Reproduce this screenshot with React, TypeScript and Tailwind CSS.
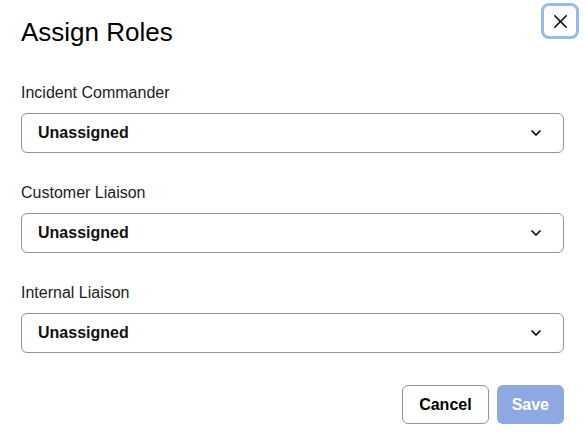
import { ChevronDown, X } from 'lucide-react';

const roles = ['Incident Commander', 'Customer Liaison', 'Internal Liaison'];

function RoleSelect({ label }: { label: string }) {
  return (
    <div className="flex flex-col">
      <label className="mb-2 text-base leading-6 text-[#1c1c1e]">{label}</label>
      <button
        type="button"
        className="flex h-10 w-full items-center justify-between rounded-md border border-[#8e96a4] bg-white pl-4 pr-[19px] text-left"
      >
        <span className="text-base font-bold text-[#111]">Unassigned</span>
        <ChevronDown className="h-4 w-4 text-black" strokeWidth={2.5} />
      </button>
    </div>
  );
}

export default function App() {
  return (
    <div
      className="relative h-[437px] w-[585px] bg-white"
      style={{ fontFamily: '"Liberation Sans", Arial, sans-serif' }}
    >
      <button
        type="button"
        className="absolute right-[6px] top-[3px] flex h-9 w-[38px] items-center justify-center rounded-lg border-[3px] border-[#93bdf0] bg-white"
      >
        <X className="h-[23px] w-[23px] text-black" strokeWidth={1.5} />
      </button>

      <div className="px-[21px] pt-4">
        <h2 className="text-[26px] leading-8 text-black">Assign Roles</h2>

        <div className="mt-[33px] flex flex-col gap-7">
          {roles.map((role) => (
            <RoleSelect key={role} label={role} />
          ))}
        </div>

        <div className="mt-8 flex justify-end gap-2">
          <button
            type="button"
            className="h-[39px] rounded-md border border-[#8e96a4] bg-white px-4 text-base font-bold text-black"
          >
            Cancel
          </button>
          <button
            type="button"
            className="h-[39px] rounded-md bg-[#8ea8e2] px-[15px] text-base font-bold text-white"
          >
            Save
          </button>
        </div>
      </div>
    </div>
  );
}
